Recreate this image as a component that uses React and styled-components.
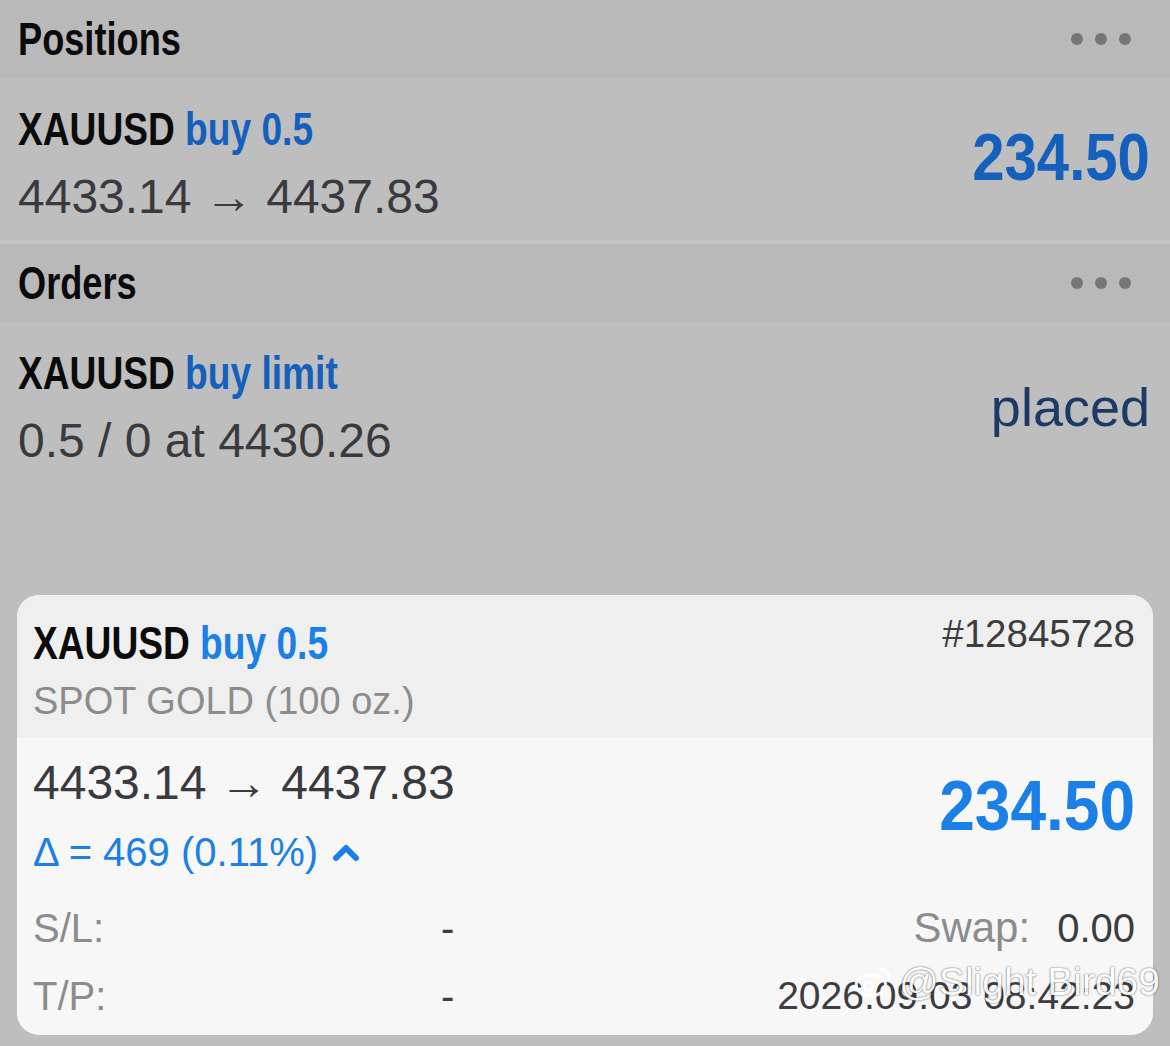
import React from "react";
import styled, { createGlobalStyle } from "styled-components";

const GlobalStyle = createGlobalStyle`
  html, body {
    margin: 0;
    padding: 0;
    background: #bebebe;
  }
  body {
    font-family: "Liberation Sans", Arial, sans-serif;
  }
`;

// no condensed face installed, so the bold condensed titles are squeezed horizontally
const Narrow = styled.span`
  display: inline-block;
  white-space: nowrap;
  font-family: "Liberation Sans", Arial, sans-serif;
  font-weight: 700;
  transform: scaleX(${(p) => p.$scale || 0.79});
  transform-origin: ${(p) => (p.$right ? "right center" : "left center")};
`;

const Screen = styled.div`
  position: relative;
  width: 1170px;
  height: 1046px;
  overflow: hidden;
  background: #bebebe;
  display: flex;
  flex-direction: column;
`;

const SectionHeader = styled.div`
  height: 78px;
  flex: none;
  background: #b9b9b9;
  display: flex;
  align-items: center;
  justify-content: space-between;
  padding: 0 39px 0 18px;
`;

const SectionTitle = styled.h2`
  margin: 0;
  font-weight: 700;
  font-size: 47px;
  line-height: 60px;
  color: #0b0b0b;
`;

const Dots = styled.div`
  display: flex;
  gap: 12px;

  span {
    width: 12px;
    height: 12px;
    border-radius: 50%;
    background: #767676;
  }
`;

const ListRow = styled.div`
  flex: none;
  height: ${(p) => p.$height}px;
  display: flex;
  justify-content: space-between;
  padding: 0 20px 0 18px;
  border-bottom: ${(p) => (p.$divider ? "4px solid #c4c4c4" : "none")};
`;

const RowText = styled.div`
  display: flex;
  flex-direction: column;
  padding-top: 22px;
  gap: 11px;
`;

const Symbol = styled.div`
  font-size: 47px;
  line-height: 58px;
  color: #0b0b0b;

  em {
    font-style: normal;
    color: ${(p) => p.$accent};
  }
`;

const Prices = styled.div`
  font-size: 48px;
  line-height: ${(p) => p.$line || 56}px;
  color: #3a3a3e;
  white-space: nowrap;
`;

const Profit = styled.div`
  align-self: center;
  font-size: ${(p) => p.$size}px;
  color: ${(p) => p.$color};
  margin-top: ${(p) => p.$offset || 0}px;
`;

const Status = styled.div`
  align-self: center;
  margin-top: 8px;
  font-size: 54px;
  color: #1c3a66;
`;

const Spacer = styled.div`
  flex: 1;
`;

const Card = styled.div`
  flex: none;
  margin: 0 17px 11px;
  border-radius: 22px;
  overflow: hidden;
  background: #f7f7f7;
`;

const CardHead = styled.div`
  height: 143px;
  background: #efefef;
  display: flex;
  justify-content: space-between;
  padding: 19px 18px 0 16px;
  box-sizing: border-box;
`;

const HeadLeft = styled.div`
  display: flex;
  flex-direction: column;
  gap: 6px;
`;

const Subtitle = styled.div`
  font-size: 38px;
  line-height: 46px;
  color: #8c8c8c;
`;

const Ticket = styled.div`
  margin-top: -5px;
  font-size: 38.5px;
  line-height: 50px;
  color: #3d3d40;
`;

const CardBody = styled.div`
  padding: 20px 18px 13px 16px;
`;

const BodyTop = styled.div`
  display: flex;
  justify-content: space-between;
`;

const Delta = styled.div`
  display: flex;
  align-items: center;
  gap: 14px;
  margin-top: 18px;
  font-size: 40px;
  line-height: 52px;
  color: #1a7fe6;
`;

const InfoGrid = styled.div`
  margin-top: 24px;
  display: grid;
  grid-template-columns: 408px 1fr auto;
  row-gap: 16px;
  font-size: 40px;
  line-height: 52px;
`;

const Label = styled.span`
  color: #8c8c8c;
`;

const Dash = styled.span`
  color: #3d3d40;
`;

const RightCell = styled.span`
  text-align: right;
  font-size: ${(p) => p.$size || 40}px;
  color: #3d3d40;

  b {
    font-weight: 400;
    font-size: 42px;
    color: #8c8c8c;
    margin-right: 27px;
  }
`;

const Watermark = styled.div`
  position: absolute;
  right: 10px;
  bottom: 42px;
  display: flex;
  align-items: center;
  gap: 6px;
  font-size: 39px;
  color: #fff;
  text-shadow: 0 0 2px rgba(0, 0, 0, 0.5), 0 0 1px rgba(0, 0, 0, 0.55);
  opacity: 0.9;
`;

function ChevronUp() {
  return (
    <svg width="28" height="20" viewBox="0 0 28 20">
      <polyline
        points="4,16 14,6 24,16"
        fill="none"
        stroke="#1a7fe6"
        strokeWidth="6"
        strokeLinecap="round"
        strokeLinejoin="round"
      />
    </svg>
  );
}

function WeiboMark() {
  return (
    <svg width="40" height="34" viewBox="0 0 38 32">
      <ellipse cx="17" cy="19" rx="14" ry="10" fill="none" stroke="#fff" strokeWidth="3" />
      <circle cx="15" cy="20" r="4" fill="none" stroke="#fff" strokeWidth="2.5" />
      <path d="M26 4 a8 8 0 0 1 8 9" fill="none" stroke="#fff" strokeWidth="3" strokeLinecap="round" />
    </svg>
  );
}

function MoreDots() {
  return (
    <Dots>
      <span />
      <span />
      <span />
    </Dots>
  );
}

export default function App() {
  return (
    <Screen>
      <GlobalStyle />
      <SectionHeader>
        <SectionTitle>
          <Narrow $scale={0.77}>Positions</Narrow>
        </SectionTitle>
        <MoreDots />
      </SectionHeader>
      <ListRow $height={162} $divider>
        <RowText>
          <Symbol $accent="#1560bd">
            <Narrow>
              XAUUSD <em>buy 0.5</em>
            </Narrow>
          </Symbol>
          <Prices>4433.14 → 4437.83</Prices>
        </RowText>
        <Profit $size={66} $color="#1560bd" $offset={-4}>
          <Narrow $scale={0.88} $right>
            234.50
          </Narrow>
        </Profit>
      </ListRow>
      <SectionHeader>
        <SectionTitle>
          <Narrow $scale={0.77}>Orders</Narrow>
        </SectionTitle>
        <MoreDots />
      </SectionHeader>
      <ListRow $height={162}>
        <RowText>
          <Symbol $accent="#1560bd">
            <Narrow>
              XAUUSD <em>buy limit</em>
            </Narrow>
          </Symbol>
          <Prices>0.5 / 0 at 4430.26</Prices>
        </RowText>
        <Status>placed</Status>
      </ListRow>
      <Spacer />
      <Card>
        <CardHead>
          <HeadLeft>
            <Symbol $accent="#1a7fe6">
              <Narrow>
                XAUUSD <em>buy 0.5</em>
              </Narrow>
            </Symbol>
            <Subtitle>SPOT GOLD (100 oz.)</Subtitle>
          </HeadLeft>
          <Ticket>#12845728</Ticket>
        </CardHead>
        <CardBody>
          <BodyTop>
            <div>
              <Prices $line={50}>4433.14 → 4437.83</Prices>
              <Delta>
                <span>Δ = 469 (0.11%)</span>
                <ChevronUp />
              </Delta>
            </div>
            <Profit $size={70} $color="#1a7fe6" $offset={-25}>
              <Narrow $scale={0.915} $right>
                234.50
              </Narrow>
            </Profit>
          </BodyTop>
          <InfoGrid>
            <Label>S/L:</Label>
            <Dash>-</Dash>
            <RightCell>
              <b>Swap:</b>0.00
            </RightCell>
            <Label>T/P:</Label>
            <Dash>-</Dash>
            <RightCell $size={39}>2026.09.03 08:42:23</RightCell>
          </InfoGrid>
        </CardBody>
      </Card>
      <Watermark>
        <WeiboMark />
        <span>@Slight Bird69</span>
      </Watermark>
    </Screen>
  );
}
